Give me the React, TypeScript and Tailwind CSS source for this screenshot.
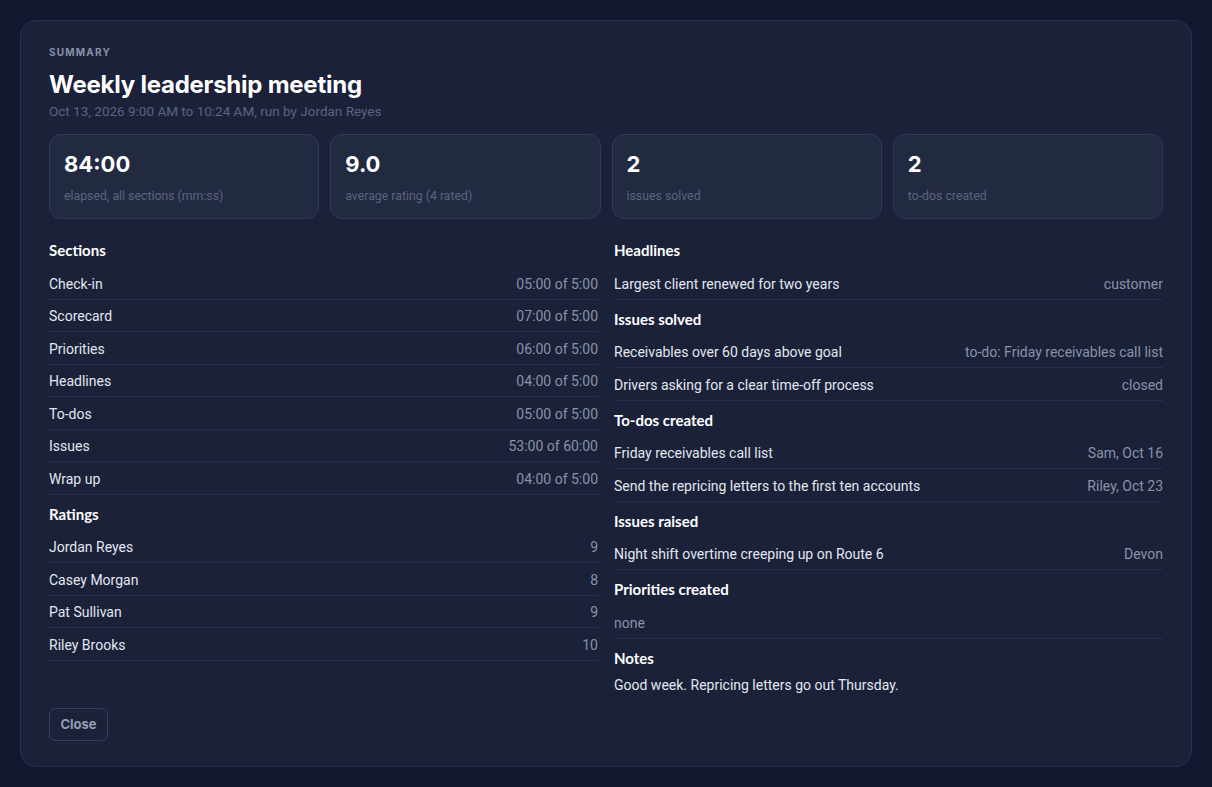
import React from 'react';

const sections: [string, string][] = [
  ['Check-in', '05:00 of 5:00'],
  ['Scorecard', '07:00 of 5:00'],
  ['Priorities', '06:00 of 5:00'],
  ['Headlines', '04:00 of 5:00'],
  ['To-dos', '05:00 of 5:00'],
  ['Issues', '53:00 of 60:00'],
  ['Wrap up', '04:00 of 5:00'],
];

const ratings: [string, string][] = [
  ['Jordan Reyes', '9'],
  ['Casey Morgan', '8'],
  ['Pat Sullivan', '9'],
  ['Riley Brooks', '10'],
];

const stats = [
  { value: '84:00', label: 'elapsed, all sections (mm:ss)' },
  { value: '9.0', label: 'average rating (4 rated)' },
  { value: '2', label: 'issues solved' },
  { value: '2', label: 'to-dos created' },
];

const Heading = ({ children }: { children: React.ReactNode }) => (
  <h3 className="pt-[9px] pb-[7px] text-[15px] leading-5 font-bold text-white font-['Lato',sans-serif]">
    {children}
  </h3>
);

const Row = ({ label, value, muted }: { label: string; value?: string; muted?: boolean }) => (
  <div className="flex items-center justify-between h-[32.5px] pt-[3px] border-b border-[#283049] text-[14px] font-['Roboto',sans-serif]">
    <span className={muted ? 'text-[#8a92a8]' : 'text-[#e3e7ef]'}>{label}</span>
    {value && <span className="text-[#8a92a8]">{value}</span>}
  </div>
);

export default function App() {
  return (
    <div className="min-h-screen bg-[#10172f] p-5 font-['Inter',sans-serif]">
      <div className="rounded-2xl border border-[#29324d] bg-[#1a2139] px-7 pt-6 pb-[25px]">
        <div className="text-[10px] leading-[14px] font-bold tracking-[0.12em] text-[#8a92a8]">SUMMARY</div>
        <h1 className="mt-[11px] text-[24px] leading-[30px] font-bold tracking-[-0.01em] text-white">
          Weekly leadership meeting
        </h1>
        <p className="mt-[2px] text-[13.5px] leading-[18px] text-[#5b6480] font-['Roboto',sans-serif]">
          Oct 13, 2026 9:00 AM to 10:24 AM, run by Jordan Reyes
        </p>

        <div className="mt-[14px] grid grid-cols-4 gap-[11px]">
          {stats.map((s) => (
            <div key={s.label} className="h-[85px] rounded-xl border border-[#303955] bg-[#222a42] px-[14px] pt-[15px]">
              <div className="text-[22px] leading-[28px] font-bold text-white">{s.value}</div>
              <div className="mt-[10px] text-[12.3px] leading-4 text-[#5b6480] font-['Roboto',sans-serif]">{s.label}</div>
            </div>
          ))}
        </div>

        <div className="mt-[12px] grid grid-cols-2 gap-4 items-start">
          <div>
            <Heading>Sections</Heading>
            {sections.map(([l, v]) => (
              <Row key={l} label={l} value={v} />
            ))}
            <Heading>Ratings</Heading>
            {ratings.map(([l, v]) => (
              <Row key={l} label={l} value={v} />
            ))}
          </div>
          <div>
            <Heading>Headlines</Heading>
            <Row label="Largest client renewed for two years" value="customer" />
            <Heading>Issues solved</Heading>
            <Row label="Receivables over 60 days above goal" value="to-do: Friday receivables call list" />
            <Row label="Drivers asking for a clear time-off process" value="closed" />
            <Heading>To-dos created</Heading>
            <Row label="Friday receivables call list" value="Sam, Oct 16" />
            <Row label="Send the repricing letters to the first ten accounts" value="Riley, Oct 23" />
            <Heading>Issues raised</Heading>
            <Row label="Night shift overtime creeping up on Route 6" value="Devon" />
            <Heading>Priorities created</Heading>
            <Row label="none" muted />
            <Heading>Notes</Heading>
            <p className="text-[14px] leading-5 text-[#e3e7ef] font-['Roboto',sans-serif]">
              Good week. Repricing letters go out Thursday.
            </p>
          </div>
        </div>

        <button className="mt-[13px] h-[33px] w-[59px] rounded-md border border-[#36405c] pt-px text-[13px] font-bold text-[#949db3]">
          Close
        </button>
      </div>
    </div>
  );
}
